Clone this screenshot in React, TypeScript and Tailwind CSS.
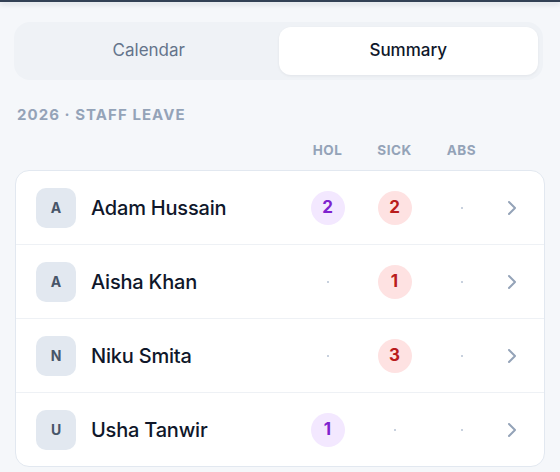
import { ChevronRight } from 'lucide-react';

type Staff = { name: string; hol: number; sick: number; abs: number };

const staff: Staff[] = [
  { name: 'Adam Hussain', hol: 2, sick: 2, abs: 0 },
  { name: 'Aisha Khan', hol: 0, sick: 1, abs: 0 },
  { name: 'Niku Smita', hol: 0, sick: 3, abs: 0 },
  { name: 'Usha Tanwir', hol: 1, sick: 0, abs: 0 },
];

function Count({ value, tone }: { value: number; tone: 'hol' | 'sick' | 'abs' }) {
  if (!value) {
    return (
      <div className="w-[67px] flex justify-center">
        <span className="w-[2px] h-[2px] rounded-full bg-[#b6c2d3]" />
      </div>
    );
  }
  const colours =
    tone === 'hol'
      ? 'bg-[#f3e8ff] text-[#7e22ce]'
      : tone === 'sick'
        ? 'bg-[#fee2e2] text-[#b91c1c]'
        : 'bg-[#fef3c7] text-[#b45309]';
  return (
    <div className="w-[67px] flex justify-center">
      <span className={`w-[34px] h-[34px] rounded-full flex items-center justify-center text-[17px] font-bold ${colours}`}>
        {value}
      </span>
    </div>
  );
}

export default function App() {
  return (
    <div className="w-[560px] h-[472px] bg-[#f5f7fa] overflow-hidden font-['Inter',sans-serif]">
      <div className="h-[2px] bg-[#334155] shadow-[0_2px_5px_rgba(15,23,42,0.18)]" />

      <div className="px-[14px] pt-[20px]">
        <div className="flex p-[5px] rounded-[16px] bg-[#eff2f6] w-[529px]">
          <button className="flex-1 h-[48px] rounded-[12px] text-[17px] text-[#64748b]">Calendar</button>
          <button className="flex-1 h-[48px] rounded-[12px] bg-white text-[17px] font-medium text-[#0f172a] shadow-[0_1px_3px_rgba(15,23,42,0.06)]">
            Summary
          </button>
        </div>
      </div>

      <div className="px-[17px] mt-[25px] text-[15px] font-bold tracking-[0.07em] text-[#94a3b8] leading-[20px]">
        2026 · STAFF LEAVE
      </div>

      <div className="mx-[15px] w-[530px]">
        <div className="flex items-center px-[21px] mt-[15px] h-[20px] text-[13.5px] font-bold tracking-[0.04em] text-[#94a3b8]">
          <div className="flex-1" />
          <div className="w-[67px] text-center">HOL</div>
          <div className="w-[67px] text-center">SICK</div>
          <div className="w-[67px] text-center">ABS</div>
          <div className="w-6 ml-[5px]" />
        </div>

        <div className="mt-[10px] bg-white border border-[#e2e8f0] rounded-[14px] overflow-hidden">
          {staff.map((s, i) => (
            <div
              key={s.name}
              className={`flex items-center h-[73px] box-content px-5 ${i > 0 ? 'border-t border-[#eef1f5]' : ''}`}
            >
              <div className="w-10 h-10 rounded-[10px] bg-[#e2e8f0] flex items-center justify-center text-[14px] font-bold text-[#475569]">
                {s.name[0]}
              </div>
              <div className="flex-1 ml-[15px] text-[20px] font-medium text-[#0f172a] tracking-[-0.01em]">{s.name}</div>
              <Count value={s.hol} tone="hol" />
              <Count value={s.sick} tone="sick" />
              <Count value={s.abs} tone="abs" />
              <ChevronRight className="ml-[5px] text-[#94a3b8]" size={24} strokeWidth={2} />
            </div>
          ))}
        </div>
      </div>
    </div>
  );
}
